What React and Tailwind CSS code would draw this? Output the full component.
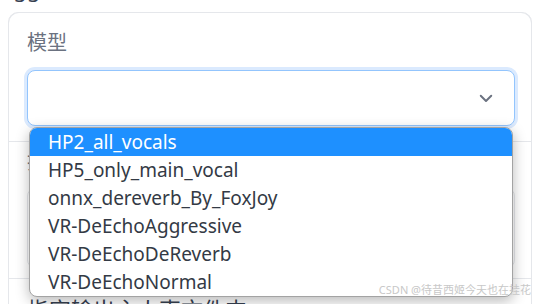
import React from "react";

const models = [
  "HP2_all_vocals",
  "HP5_only_main_vocal",
  "onnx_dereverb_By_FoxJoy",
  "VR-DeEchoAggressive",
  "VR-DeEchoDeReverb",
  "VR-DeEchoNormal",
];

const ChevronDown = () => (
  <svg width="18" height="18" viewBox="0 0 24 24" fill="none" stroke="#6b7280" strokeWidth="2.6" strokeLinecap="round" strokeLinejoin="round">
    <path d="M5 9l7 7 7-7" />
  </svg>
);

export default function App() {
  return (
    <div className="relative w-[535px] h-[304px] overflow-hidden bg-white font-['Noto_Sans','Noto_Sans_CJK_SC',sans-serif] text-[#374151]">
      <div className="h-[12px] overflow-hidden">
        <div className="mt-[-26px] pl-[1px] text-[22px] leading-[28px] whitespace-nowrap">aggressive,</div>
      </div>

      <div className="ml-[8px] mr-[3px] rounded-t-[10px] border border-[#e5e7eb] bg-[#e5e7eb] flex flex-col gap-px">
        <div className="bg-white rounded-t-[10px] pl-[18px] pr-[16px] pt-[16px] pb-[15px]">
          <div className="text-[20px] leading-[28px] text-[#6b7280]">模型</div>
          <div className="mt-[13px] h-[56px] rounded-[8px] border border-[#93c5fd] ring-[3px] ring-[#dbeafe] bg-white flex items-center justify-end pr-[19px]">
            <ChevronDown />
          </div>
        </div>

        <div className="bg-white pl-[18px] pr-[16px] pt-[6px] h-[136px]">
          <div className="text-[20px] leading-[28px] text-[#6b7280]">指定输入音频文件夹路径</div>
          <div className="mt-[12px] h-[80px] rounded-[8px] border border-[#e5e7eb]"></div>
        </div>

        <div className="bg-white pl-[18px] pr-[16px] pt-[16px] h-[40px]">
          <div className="text-[22px] leading-[28px] text-[#374151]">指定输出主人声文件夹</div>
        </div>
      </div>

      <div className="absolute left-[29px] top-[127px] w-[484px] rounded-[8px] border border-[#a3a3a3] bg-white overflow-hidden shadow-[0_4px_14px_rgba(0,0,0,0.28)]">
        {models.map((m, i) => (
          <div
            key={m}
            className={`h-[28px] pl-[18px] flex items-center text-[19px] leading-[28px] whitespace-nowrap ${i === 0 ? "bg-[#1e90ff] text-white" : "text-[#333a45]"}`}
          >
            {m}
          </div>
        ))}
      </div>

      <div className="absolute right-[4px] top-[283px] text-[11px] leading-[14px] text-[#c8c8c8] whitespace-nowrap">
        CSDN @待昔西姬今天也在挂花
      </div>
    </div>
  );
}
